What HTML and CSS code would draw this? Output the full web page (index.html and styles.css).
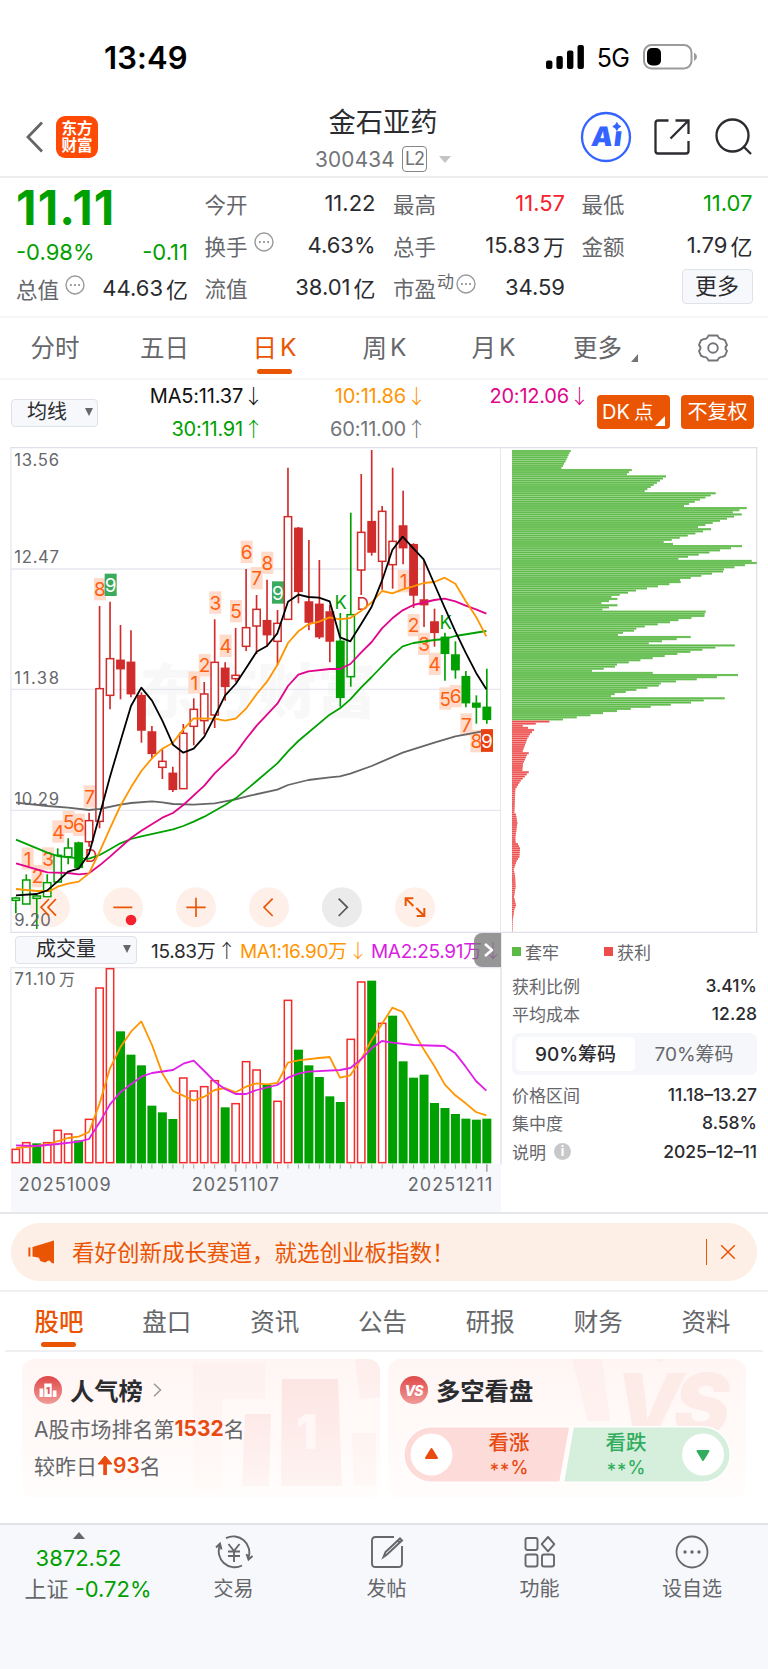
FILE: index.html
```html
<!DOCTYPE html>
<html lang="zh-CN">
<head>
<meta charset="utf-8">
<title>金石亚药 300434</title>
<link rel="stylesheet" href="styles.css">
</head>
<body>
<div class="status">
  <span class="clock">13:49</span>
  <span class="status-right">
    <svg width="38" height="24" viewBox="0 0 38 24"><rect x="0" y="15.5" width="6.4" height="8.5" rx="2"/><rect x="10.4" y="11" width="6.4" height="13" rx="2"/><rect x="21" y="5.500" width="6.4" height="18.500" rx="2"/><rect x="31.500" y="0" width="6.4" height="24" rx="2"/></svg>
    <span class="net">5G</span>
    <svg class="battery" width="54" height="26" viewBox="0 0 54 26"><rect x="1" y="1" width="47.500" height="23.500" rx="7.500" fill="none" stroke="#9b9b9b" stroke-width="2"/><rect x="4" y="4" width="14" height="17.500" rx="5" fill="#000"/><path d="M51 8.500q3 1.500 3 4.300t-3 4.300z" fill="#9b9b9b"/></svg>
  </span>
</div>

<header class="header">
  <div class="header-left">
    <svg width="19" height="32" viewBox="0 0 19 32"><path d="M17 1.500 3 16l14 14.500" fill="none" stroke="#666" stroke-width="2.800"/></svg>
    <div class="logo"><span>东方</span><span>财富</span></div>
  </div>
  <div class="header-mid">
    <h1>金石亚药</h1>
    <div class="code"><span>300434</span><span class="l2">L2</span><i></i></div>
  </div>
  <div class="header-right">
    <svg width="52" height="52" viewBox="0 0 52 52"><circle cx="26" cy="26" r="24" fill="none" stroke="#3563ff" stroke-width="2.300"/><text class="ai" transform="translate(10.500 35) skewX(-7)">Aı</text><path d="M36.800 11.500q.8 3.200 4 4-3.200.8-4 4-.8-3.200-4-4 3.200-.8 4-4z" fill="#3563ff" stroke="#3563ff" stroke-width="1"/></svg>
    <svg width="36" height="36" viewBox="0 0 36 36" fill="none" stroke="#2b2c30" stroke-width="2.300"><path d="M14.500 1.500H4Q1.500 1.500 1.500 4v28q0 2.500 2.500 2.500h28q2.500 0 2.500-2.500V22M21.500 1.500h13v13.500M34 2 16.500 19.500"/></svg>
    <svg width="37" height="37" viewBox="0 0 37 37" fill="none" stroke="#2b2c30" stroke-width="2.300"><circle cx="17.500" cy="17.500" r="16"/><path d="m28.500 28.500 7.500 7.500"/></svg>
  </div>
</header>

<section class="quote">
  <div class="q-price">
    <div class="price">11.11</div>
    <div class="row chg"><span>-0.98%</span><span>-0.11</span></div>
    <div class="row"><label>总值<svg class="more-dot" viewBox="0 0 20 20"><circle cx="10" cy="10" r="9"/><path d="M5 10h1.800M9.100 10h1.800M13.200 10h1.800"/></svg></label><b>44.63<em>亿</em></b></div>
  </div>
  <div class="q-col">
    <div class="row"><label>今开</label><b>11.22</b></div>
    <div class="row"><label>换手<svg class="more-dot" viewBox="0 0 20 20"><circle cx="10" cy="10" r="9"/><path d="M5 10h1.800M9.100 10h1.800M13.200 10h1.800"/></svg></label><b>4.63%</b></div>
    <div class="row"><label>流值</label><b>38.01<em>亿</em></b></div>
  </div>
  <div class="q-col">
    <div class="row"><label>最高</label><b class="up">11.57</b></div>
    <div class="row"><label>总手</label><b>15.83<em>万</em></b></div>
    <div class="row"><label>市盈<small>动</small><svg class="more-dot tight" viewBox="0 0 20 20"><circle cx="10" cy="10" r="9"/><path d="M5 10h1.800M9.100 10h1.800M13.200 10h1.800"/></svg></label><b>34.59</b></div>
  </div>
  <div class="q-col">
    <div class="row"><label>最低</label><b class="down">11.07</b></div>
    <div class="row"><label>金额</label><b>1.79<em>亿</em></b></div>
    <div class="row end"><span class="more-btn">更多</span></div>
  </div>
</section>

<nav class="periods">
  <span>分时</span><span>五日</span><span class="on">日<u>K</u></span><span>周<u>K</u></span><span>月<u>K</u></span><span class="drop">更多<i></i></span>
  <span><svg width="30" height="28" viewBox="0 0 30 28" fill="none" stroke="#737478" stroke-width="1.900" stroke-linejoin="round"><path d="M10.500 1.500h9q1.300 3.800 5 3.600l2.600 1.300 1.900 4.600q-3 3 0 6l-1.900 4.600-2.600 1.300q-3.700-.2-5 3.600h-9q-1.300-3.800-5-3.600l-2.600-1.300L1 17q3-3 0-6l1.900-4.600 2.600-1.300q3.700.2 5-3.600z"/><circle cx="15" cy="14" r="4.800"/></svg></span>
</nav>

<section class="ma-bar">
  <span class="select">均线<i></i></span>
  <div class="ma-grid">
    <span class="c-black">MA5:11.37<s>↓</s></span><span class="c-orange">10:11.86<s>↓</s></span><span class="c-pink">20:12.06<s>↓</s></span>
    <span class="c-green">30:11.91<s>↑</s></span><span class="c-gray">60:11.00<s>↑</s></span>
  </div>
  <div class="ma-btns"><span class="btn">DK<em>点</em><i></i></span><span class="btn">不复权</span></div>
</section>

<section class="charts">
  <div class="chart-left">
    <svg id="kline" width="501" height="486" viewBox="0 21 1503 1458"></svg>
    <div class="vol-bar">
      <span class="select">成交量<i></i></span>
      <span class="v1">15.83万<s>↑</s></span><span class="v2">MA1:16.90万<s>↓</s></span><span class="v3">MA2:25.91万<s>↓</s></span>
      <span class="expand"><svg width="27" height="34" viewBox="0 0 27 34"><path d="m11 11 7 6-7 6" fill="none" stroke="#fff" stroke-width="2.600" stroke-linejoin="round"/></svg></span>
    </div>
    <svg id="volume" width="501" height="245" viewBox="0 111 1503 735"></svg>
  </div>
  <div class="chart-right">
    <svg id="chips" width="267" height="486" viewBox="-21 6 801 1458"></svg>
    <div class="chip-info">
      <div class="legend"><span><i class="lg"></i>套牢</span><span><i class="lr"></i>获利</span></div>
      <dl><dt>获利比例</dt><dd>3.41%</dd><dt>平均成本</dt><dd>12.28</dd></dl>
      <div class="seg"><span class="on">90%筹码</span><span>70%筹码</span></div>
      <dl><dt>价格区间</dt><dd>11.18–13.27</dd><dt>集中度</dt><dd>8.58%</dd><dt>说明<i>i</i></dt><dd>2025–12–11</dd></dl>
    </div>
  </div>
</section>

<section class="promo-wrap">
  <div class="promo">
    <svg width="28" height="24" viewBox="0 0 28 24" fill="#ea5504"><path d="M.4 7.500h2v9h-2zM4.500 7 26 .5v23l-2.500-.8-2-2.200-2.200.6q-1.500 2-4 1l-3-1.100-1.300-3.200L4.500 16.500z"/></svg>
    <p>看好创新成长赛道，就选创业板指数！</p>
    <span class="promo-close"><svg width="16" height="16" viewBox="0 0 16 16"><path d="m1.200 1.200 13.600 13.600m0-13.600L1.200 14.800" stroke="#ea5504" stroke-width="1.500"/></svg></span>
  </div>
</section>

<nav class="tabs"><span class="on">股吧</span><span>盘口</span><span>资讯</span><span>公告</span><span>研报</span><span>财务</span><span>资料</span></nav>

<section class="cards">
  <div class="card">
    <svg class="art" width="190" height="139" viewBox="0 0 190 139"><defs><linearGradient id="a" x1="0" y1="0" x2="0" y2="1"><stop offset="0" stop-color="#fbdedb" stop-opacity=".7"/><stop offset="1" stop-color="#fbdedb" stop-opacity=".3"/></linearGradient></defs><g fill="url(#a)"><path d="M3 4h72v36H32v90H3z" opacity=".3"/><path d="M55 55h26l-2 72H52z" opacity=".8"/><path d="M92 20h56l4 107H91z"/><path d="M162 74h24v53h-22zM165 0h25v38l-20 2z" opacity=".5"/></g><text class="art-one" x="106" y="90">1</text></svg>
    <div class="card-title"><svg width="28" height="28" viewBox="0 0 28 28"><defs><linearGradient id="b" x1="0" y1="0" x2="0" y2="1"><stop offset="0" stop-color="#e04848"/><stop offset="1" stop-color="#f09c98"/></linearGradient></defs><circle cx="14" cy="14" r="14" fill="url(#b)"/><path d="M5.500 12.500h3.800V21H5.500zM10.300 7.500h7.400V21h-7.400zM18.800 14.500h3.700V21h-3.700z" fill="#fff"/><text x="14" y="17.500" text-anchor="middle" class="mini-one">1</text></svg><b>人气榜</b><svg width="9" height="14" viewBox="0 0 9 14"><path d="m1 .8 6.500 6.200L1 13.200" fill="none" stroke="#999" stroke-width="1.500"/></svg></div>
    <p>A股市场排名第<b>1532</b>名</p>
    <p>较昨日<svg width="16" height="19" viewBox="0 0 16 19"><path d="M8 0 1 8h5.800v11h2.600V8H15z" fill="#e84a10" stroke="#e84a10"/></svg><b class="mid">93</b>名</p>
  </div>
  <div class="card">
    <svg class="art" width="174" height="139" viewBox="0 0 174 139"><path d="M0 0h30l8 62H16zM82 0h12l-7 4z" fill="#fbdedb" opacity=".28"/><text class="art-vs" x="43" y="75">VS</text></svg>
    <div class="card-title"><svg width="28" height="28" viewBox="0 0 28 28"><circle cx="14" cy="14" r="14" fill="url(#b)"/><text x="13.500" y="19.500" text-anchor="middle" class="mini-vs">VS</text></svg><b>多空看盘</b></div>
    <div class="vote">
      <svg class="vote-bg" width="328" height="57" viewBox="0 0 328 57"><path d="M28.500.8H167L157 56.200H28.500a27.700 27.700 0 0 1 0-55.400z" fill="#fddbd8" stroke="#fff" stroke-width="1.500"/><path d="M170 .8h129.500a27.700 27.700 0 0 1 0 55.400H160.500z" fill="#d6efdc" stroke="#fff" stroke-width="1.500"/><circle cx="28.500" cy="28.500" r="21" fill="#fff"/><circle cx="300" cy="28.500" r="21" fill="#fff"/><path d="m28.500 23 5.500 9H23z" fill="#e84a10" stroke="#e84a10" stroke-width="2" stroke-linejoin="round"/><path d="m300 34 5.500-9h-11z" fill="#32ad5e" stroke="#32ad5e" stroke-width="2" stroke-linejoin="round"/></svg>
      <div class="v-up"><span>看涨</span><span><u>**</u>%</span></div>
      <div class="v-down"><span>看跌</span><span><u>**</u>%</span></div>
    </div>
  </div>
</section>

<footer class="bottom">
  <div class="index"><i></i><span class="idx">3872.52</span><span class="idx2">上证 <b>-0.72%</b></span></div>
  <div class="item"><svg width="40" height="34" viewBox="0 0 40 34" fill="none" stroke="#66676b" stroke-width="1.900"><path d="M12 3.200a16 16 0 0 1 22.500 19.300M28 30.500A16 16 0 0 1 6 10M2 12.500l4-4 1.500 6M38.500 21l-4 3.500-2-5.500M14.500 9l5.500 7 5.500-7M14 16.500h12M14 21h12M20 16v11"/></svg><span>交易</span></div>
  <div class="item"><svg width="34" height="34" viewBox="0 0 34 34" fill="none" stroke="#66676b" stroke-width="1.900"><path d="M24 2H5.500Q2 2 2 5.500v23Q2 32 5.500 32h23q3.500 0 3.500-3.500V11"/><path d="m13.500 22 2-5L30 3.500l2 2L17 19.500zM27 5l3.500 3" stroke-width="2"/></svg><span>发帖</span></div>
  <div class="item"><svg width="32" height="34" viewBox="0 0 32 34" fill="none" stroke="#66676b" stroke-width="1.900"><rect x="1.500" y="3" width="12" height="12" rx="2"/><rect x="1.500" y="19.500" width="12" height="12" rx="2"/><rect x="18" y="19.500" width="12" height="12" rx="2"/><path d="m24 2 6.300 7.200L24 16.400l-6.300-7.200z" stroke-linejoin="round"/></svg><span>功能</span></div>
  <div class="item"><svg width="34" height="34" viewBox="0 0 34 34" fill="none" stroke="#66676b" stroke-width="1.800"><circle cx="17" cy="17" r="15.500"/><g fill="#66676b" stroke="none"><circle cx="10" cy="17" r="1.700"/><circle cx="17" cy="17" r="1.700"/><circle cx="24" cy="17" r="1.700"/></g></svg><span>设自选</span></div>
</footer>
<script src="charts.js"></script>
</body>
</html>
```

FILE: styles.css
```css
* { box-sizing: border-box; }
body { margin: 0; width: 768px; height: 1669px; overflow: hidden; background: #fff; color: #2b2c30; font-family: Inter, "Noto Sans CJK SC", sans-serif; }
svg { display: block; flex: none; }
i, em, s, u { font-style: normal; text-decoration: none; }

.status { height: 100px; padding: 14px 71px 0 104px; display: flex; justify-content: space-between; align-items: center; }
.clock { font-size: 31px; font-weight: 600; color: #000; letter-spacing: .1px; }
.status-right { display: flex; align-items: center; }
.net { font-size: 25px; color: #000; margin: 2px 14px 0 13px; letter-spacing: -.8px; }

.header { height: 78px; border-bottom: 2px solid #ededef; display: grid; grid-template-columns: 270px 1fr 270px; }
.header-left { display: flex; align-items: center; padding: 0 0 4px 25px; gap: 12px; }
.logo { width: 42px; height: 42px; border-radius: 9px; background: #ff4a05; color: #fff; font-size: 15.500px; font-weight: 700; line-height: 17px; display: flex; flex-direction: column; align-items: center; justify-content: center; }
.header-mid { display: flex; flex-direction: column; align-items: center; }
h1 { margin: 5px 0 0 -2px; font-size: 27.200px; line-height: 36px; font-weight: 400; }
.code { display: flex; align-items: center; height: 36px; font-size: 20.800px; color: #737478; letter-spacing: .2px; margin-right: 2px; }
.l2 { border: 1.500px solid #85868a; border-radius: 4px; font-size: 18px; line-height: 23px; height: 26px; width: 25px; text-align: center; margin: 0 12px 0 7px; letter-spacing: -1px; }
.code i { border: 6px solid transparent; border-top: 7px solid #c4c4c6; border-bottom: 0; }
.header-right { display: flex; align-items: center; justify-content: flex-end; padding: 0 16px 4px 0; gap: 22.500px; }
.header-right svg:last-child { margin-left: 2.500px; }
.ai { font: 900 27px Inter, sans-serif; fill: #3563ff; letter-spacing: 1px; }

.quote { height: 140px; padding: 4px 15px 0 16px; border-bottom: 2px solid #f6f6f8; display: grid; grid-template-columns: 172px 171px 172px 172px; column-gap: 16.500px; }
.q-col:nth-child(n+3) { margin-left: 1px; margin-right: -1px; }
.q-col:nth-child(4) { margin-right: 0; }
.row { height: 42px; display: flex; justify-content: space-between; align-items: center; font-size: 22px; }
.row label { color: #66676b; display: flex; align-items: center; font-size: 21.500px; }
.row b { font-weight: 400; font-size: 22px; display: flex; align-items: center; }
.row b em { margin-left: 3px; }
.price { height: 55px; font-size: 47.500px; line-height: 52px; font-weight: 700; color: #00a000; letter-spacing: 1.200px; }
.chg { height: 30px; color: #00a000; font-size: 22px; }
.more-dot { width: 20px; height: 20px; margin: -7px 0 0 6px; fill: none; stroke: #999a9e; stroke-width: 1.400; }
.more-dot path { stroke-width: 1.800; }
.more-dot.tight { margin-left: 2px; }
.row small { font-size: 17px; margin: -14px 0 0 1px; }
.row .up { color: #f5222d; }
.row .down { color: #00a000; }
.row.end { justify-content: flex-end; }
.more-btn { width: 71px; height: 35px; border: 1.500px solid #e0e2ea; border-radius: 4px; background: #f7f8fb; line-height: 32px; text-align: center; margin-top: -1px; }

.periods { height: 62px; border-bottom: 2px solid #f6f6f8; display: grid; grid-template-columns: 110px 109px 111px 109px 109px 110px 110px; font-size: 24.500px; color: #66676b; }
.periods span { position: relative; display: flex; align-items: center; justify-content: center; padding-bottom: 3px; }
.periods span:last-child { padding-bottom: 1px; }
.periods u { margin-left: 3px; }
.periods .on { color: #ea5504; }
.periods .on::after, .tabs .on::after { content: ""; position: absolute; left: 50%; bottom: 4px; width: 35px; height: 5px; margin-left: -17.500px; border-radius: 2.500px; background: #ea5504; }
.periods .drop { padding-left: 5px; }
.periods .drop i { border-left: 7px solid transparent; border-bottom: 8px solid #737478; margin: 22px 0 0 9px; }

.ma-bar { height: 67px; display: grid; grid-template-columns: 98px 488px 1fr; padding-left: 11px; }
.select { display: flex; align-items: center; justify-content: space-between; border: 1.500px solid #e0e2ea; border-radius: 4px; background: #f7f8fb; color: #2b2c30; line-height: 24px; padding-bottom: 2px !important; }
.select i { border: 4.500px solid transparent; border-top: 8px solid #66676b; border-bottom: 0; }
.ma-bar .select { width: 87px; height: 28px; margin-top: 19px; padding: 0 4px 0 15px; font-size: 20px; }
.ma-grid { display: grid; grid-template-columns: 150px 163px 163px; grid-template-rows: 33px 33px; font-size: 20px; margin-top: -1px; }
.ma-grid span { display: flex; justify-content: flex-end; align-items: center; letter-spacing: -.2px; }
s { width: 11px; margin-left: 5px; display: inline-flex; justify-content: center; font-family: "Noto Sans CJK SC", sans-serif; font-weight: 300; }
.c-black { color: #111; } .c-orange { color: #ff9500; } .c-pink { color: #e0058c; } .c-green { color: #00a000; } .c-gray { color: #737478; }
.ma-btns { display: flex; gap: 11px; padding-top: 15px; }
.btn { position: relative; width: 73px; height: 34px; border-radius: 4px; background: #ea5504; color: #fff; font-size: 20px; line-height: 35px; text-align: center; white-space: nowrap; }
.btn:first-child { text-align: left; padding-left: 5px; }
.btn em { margin-left: 4px; font-size: 19.500px; }
.btn i { position: absolute; right: 5px; bottom: 3px; border-left: 10px solid transparent; border-bottom: 10px solid #fff; }

.charts { height: 767px; display: grid; grid-template-columns: 501px 267px; border-bottom: 2px solid #e6e7eb; }
svg text { font-family: Inter, "Noto Sans CJK SC", sans-serif; }
.vol-bar { position: relative; height: 34px; display: flex; align-items: center; padding-left: 15px; font-size: 19px; }
.vol-bar .select { width: 122px; height: 28px; padding: 0 5px 0 20px; font-size: 20px; margin-right: 14px; }
.vol-bar > span { white-space: nowrap; }
.vol-bar .v1, .vol-bar .v2, .vol-bar .v3 { width: 89px; letter-spacing: -.3px; margin-top: -2px; }
.vol-bar .v2 { width: 131px; color: #ff9500; }
.vol-bar .v3 { color: #d81ee0; }
.vol-bar s { width: 12px; margin-left: 5px; }
.expand { position: absolute; right: 0; top: 0; width: 27px; height: 34px; border-radius: 8px 0 0 8px; background: rgba(120, 120, 120, .78); }

.chip-info { border-left: 1px solid #ececf0; height: 232px; padding: 3px 11px 0 10px; color: #66676b; font-size: 17px; }
.legend { display: flex; height: 30px; align-items: center; }
.legend span { width: 92px; display: flex; align-items: center; gap: 4px; }
.legend i { width: 9px; height: 9px; }
.lg { background: #5cb946; } .lr { background: #ee4b4b; }
.chip-info dl { margin: 5px 0 0; display: grid; grid-template-columns: auto 1fr; grid-auto-rows: 28.500px; align-items: center; }
.chip-info dt { display: flex; align-items: center; }
.chip-info dt i { width: 17px; height: 17px; border-radius: 50%; background: #c8c8ca; color: #fff; font-size: 13px; font-weight: 700; line-height: 17px; text-align: center; margin-left: 8px; }
.chip-info dd { margin: 0; text-align: right; color: #2b2c30; font-weight: 500; font-size: 17.500px; }
.seg { margin-top: 5px; height: 42px; border-radius: 7px; background: #f6f7fb; padding: 4px; display: grid; grid-template-columns: 119px 1fr; font-size: 19px; line-height: 36px; text-align: center; }
.seg .on { background: #fff; border-radius: 5px; color: #2b2c30; font-weight: 500; height: 34px; }

.promo-wrap { height: 78px; padding: 9px 11px 0; border-bottom: 2px solid #f0f0f2; }
.promo { height: 58px; border-radius: 29px; background: #fdeee6; display: flex; align-items: center; padding: 0 21px 0 17px; color: #ea5504; }
.promo p { flex: 1; margin: -3px 0 0 16px; font-size: 22.500px; }
.promo-close { height: 26px; border-left: 1.500px solid #ea5504; padding: 5px 0 0 13px; }

.tabs { height: 60px; margin: 0 5px; border-bottom: 2px solid #f0f0f2; display: flex; padding-right: 3px; font-size: 24.500px; color: #66676b; }
.tabs span { position: relative; width: 108.200px; display: flex; align-items: center; justify-content: center; padding-bottom: 1px; }
.tabs .on { color: #ea5504; font-weight: 500; }
.tabs .on::after { bottom: 3px; }

.cards { height: 171px; padding: 7px 22px 0; display: grid; grid-template-columns: 358px 358px; gap: 8px; }
.card { position: relative; height: 139px; border-radius: 12px; background: linear-gradient(#fff6f4, #fffdfc); overflow: hidden; padding: 15px 12px; }
.art { position: absolute; right: 0; top: 0; }
.art-one { font: 900 48px Inter, sans-serif; fill: #fff7f5; }
.art-vs { font: italic 900 84px Inter, sans-serif; fill: #fdebe8; letter-spacing: -8px; }
.mini-one { font: 900 9px Inter, sans-serif; fill: #e25a58; }
.mini-vs { font: italic 800 14px Inter, sans-serif; fill: #fff; letter-spacing: -1px; }
.card-title { position: relative; display: flex; align-items: center; height: 31px; font-size: 24.300px; }
.card-title svg { margin-top: 1px; }
.card-title b { font-weight: 600; margin: 0 10px 0 8px; }
.card p { position: relative; margin: 5px 0 0; height: 36px; display: flex; align-items: center; font-size: 21px; color: #66676b; }
.card p + p { margin-top: 1px; }
.card p b { color: #e84a10; font-weight: 700; }
.card p b.mid { font-weight: 600; }
.vote { position: relative; width: 328px; height: 57px; margin: 21px 0 0 3px; }
.vote-bg { position: absolute; left: 0; top: 0; }
.vote div { position: absolute; top: 4px; width: 70px; text-align: center; font-size: 20.500px; line-height: 26px; font-weight: 500; display: flex; flex-direction: column; }
.vote div span:last-child { font-size: 18px; line-height: 24px; }
.vote u { position: relative; top: 3px; letter-spacing: 1px; }
.v-up { left: 71px; color: #e84a10; }
.v-down { left: 188px; color: #32ad5e; }

.bottom { height: 147px; background: #f7f8fb; border-top: 2px solid #e2e3e8; display: grid; grid-template-columns: 157px 153px 153px 153px 152px; color: #66676b; font-size: 20px; }
.item { display: flex; flex-direction: column; align-items: center; padding-top: 10px; }
.item span { margin-top: 4px; line-height: 32px; }
.index { display: flex; flex-direction: column; align-items: center; padding: 7px 0 0 0; }
.index i { border: 6px solid transparent; border-bottom: 7px solid #66676b; border-top: 0; }
.idx { color: #00a000; font-size: 22px; line-height: 32px; margin-top: 3px; }
.idx2 { font-size: 22px; line-height: 30px; padding-left: 19px; white-space: nowrap; }
.idx2 b { color: #00a000; font-weight: 400; }
```

FILE: charts.js
```js
const RED = '#d12c2c', GREEN = '#00a000';
const X0 = 47.5, STEP = 31.4;

const line = (x1, y1, x2, y2, c, w) => `<path d="M${x1} ${y1}L${x2} ${y2}" stroke="${c}" stroke-width="${w}"/>`;
const curve = (pts, c) => `<polyline points="${pts}" fill="none" stroke="${c}" stroke-width="5.4" stroke-linejoin="round"/>`;
const text = (x, y, s, size, c, extra = '') => `<text x="${x}" y="${y}" font-size="${size}" fill="${c}" ${extra}>${s}</text>`;

// Candles: [style, high, body top, body bottom, low]; r/g hollow, R/G filled
const candles = [
  ['g',1370,1374,1381,1420],['g',1303,1320,1392,1392],['g',1360,1368,1375,1467],['g',1303,1328,1370,1370],
  ['g',1225,1246,1326,1326],['g',1195,1224,1250,1273],['G',1205,1209,1282,1282],['r',1118,1142,1205,1220],
  ['r',498,746,1144,1165],['r',485,656,766,808],['R',555,661,686,778],['R',571,667,761,772],
  ['R',757,767,870,908],['R',858,876,940,957],['r',928,964,982,1017],['R',980,1000,1048,1056],
  ['r',852,880,1046,1046],['r',775,808,859,916],['r',726,762,842,883],['r',538,667,825,864],
  ['R',667,685,739,782],['r',564,706,716,725],['r',387,563,619,633],['r',465,508,558,642],
  ['R',419,542,584,620],['r',510,550,604,675],['r',83,230,538,538],['R',261,265,454,490],
  ['R',300,486,546,571],['R',360,493,590,597],['R',495,516,603,667],['G',519,604,772,800],
  ['g',218,524,710,740],['r',102,277,390,465],['R',30,245,336,347],['r',198,214,364,449],
  ['r',83,304,374,446],['R',152,258,323,373],['R',310,314,465,504],['R',360,480,494,561],
  ['R',506,546,577,620],['G',578,592,640,722],['G',604,645,689,716],['G',693,710,788,802],
  ['G',766,790,801,851],['G',686,802,838,851]
];

// Sequence markers: [x, y, label, kind]
const marks = [
  [83,1256,1],[113,1309,2],[144,1256,3],[175,1175,4],[206,1146,5],[237,1155,6],[269,1070,7],[300,448,8],
  [332,435,9,'g'],[583,728,1],[614,676,2],[646,488,3],[677,618,4],[708,514,5],[740,336,6],[770,415,7],
  [802,369,8],[834,458,9,'g'],[1211,424,1],[1241,556,2],[1272,612,3],[1304,672,4],[1336,776,5],
  [1367,769,6],[1399,854,7],[1429,904,8],[1461,902,9,'r']
];

const maLines = [
  ['#666', '48,1088 142,1098 204,1103 267,1110 299,1107 361,1094 393,1089 456,1084 487,1087 519,1092 581,1094 644,1090 707,1078 750,1067 832,1049 864,1035 925,1020 989,1012 1020,1009 1051,1001 1115,978 1208,938 1303,908 1366,889 1459,872'],
  [GREEN, '48,1199 142,1238 173,1248 236,1255 267,1256 299,1245 330,1228 361,1210 393,1197 424,1189 519,1168 550,1158 581,1145 613,1130 675,1095 707,1075 750,1040 832,970 864,934 895,903 989,824 1020,805 1051,778 1083,743 1115,711 1177,646 1208,619 1240,609 1303,600 1334,597 1366,588 1459,573'],
  ['#e0058c', '48,1270 142,1297 204,1299 236,1303 267,1300 299,1276 330,1250 393,1194 424,1172 487,1133 519,1119 550,1095 613,1037 644,1000 707,940 738,897 770,857 832,791 864,738 895,704 925,694 989,687 1020,687 1051,672 1083,638 1115,606 1146,565 1177,535 1208,511 1240,495 1303,480 1334,476 1366,484 1397,497 1428,508 1459,521'],
  ['#ff9500', '48,1347 110,1353 150,1353 173,1340 204,1331 236,1325 267,1300 299,1235 330,1165 361,1098 393,1042 424,993 456,955 487,926 519,908 550,868 581,835 644,836 675,842 707,836 738,806 770,762 801,725 832,675 864,609 895,574 925,553 957,545 989,532 1020,538 1051,534 1083,513 1115,487 1146,453 1177,460 1208,448 1240,439 1271,429 1303,426 1334,413 1366,431 1397,483 1428,530 1459,589'],
  ['#000', '48,1366 110,1362 142,1351 173,1324 204,1295 236,1286 267,1241 299,1125 330,1010 361,905 393,798 424,743 456,782 487,842 519,914 550,938 581,926 613,890 644,830 675,767 707,732 738,685 770,635 801,618 832,580 864,485 895,464 925,471 957,473 989,484 1020,592 1051,604 1083,553 1115,500 1146,422 1177,330 1208,290 1240,325 1271,358 1303,432 1334,503 1366,574 1397,638 1428,698 1459,748']
];

function drawKline() {
  let s = '';
  s += text(418, 820, '东方财富', 178, '#f8f8f8', 'font-weight="900" textLength="710"');
  for (const y of [387, 748, 1111]) s += line(33, y, 1503, y, '#e6e7ef', 4);
  s += line(33, 21, 33, 1479, '#e6e7ef', 4) + line(1502, 21, 1502, 1479, '#e6e7ef', 4);
  s += line(31, 22, 1503, 22, '#dfe0ea', 6) + line(31, 1477, 1503, 1477, '#dfe0ea', 4);
  for (const cx of [150, 369, 588, 807, 1026, 1245]) s += `<circle cx="${cx}" cy="1402" r="60" fill="${cx === 1026 ? '#ebebeb' : '#fef0e9'}"/>`;
  for (const [x, y, n, k] of marks) {
    s += `<rect x="${x - 18}" y="${y - 34}" width="36" height="67" fill="${k === 'g' ? '#3aaa5c' : k === 'r' ? '#e8400f' : '#fedbcb'}"/>`;
    s += text(x, y + 21, n, 57, k ? '#fff' : '#ff6010', 'text-anchor="middle"');
  }
  candles.forEach(([k, h, t, b, l], i) => {
    const x = X0 + i * STEP, c = k.toLowerCase() === 'r' ? RED : GREEN;
    s += line(x, h, x, t, c, 5) + line(x, b, x, l, c, 5);
    s += `<rect x="${x - 11}" y="${t}" width="22" height="${b - t}" fill="${k === 'R' || k === 'G' ? c : '#fff'}" stroke="${c}" stroke-width="4.5"/>`;
  });
  s += text(273, 1267, 'D', 52, RED, 'text-anchor="middle"') + text(1088, 509, 'D', 52, RED, 'text-anchor="middle"');
  s += text(1022, 507, 'K', 55, GREEN, 'text-anchor="middle"') + text(1337, 567, 'K', 55, GREEN, 'text-anchor="middle"');
  for (const [c, p] of maLines) s += curve(p, c);
  s += `<rect x="1443" y="868" width="36" height="67" fill="#e8400f"/>` + text(1461, 923, '9', 57, '#fff', 'text-anchor="middle"');
  [[78, '13.56'], [369, '12.47'], [732, '11.38'], [1096, '10.29'], [1459, '9.20']].forEach(([y, t]) => {
    s += text(43, y, t, 50, '#66676b', `textLength="${t.length > 4 ? 134 : 109}"`);
  });
  s += `<g fill="none" stroke="#ea5504" stroke-width="5"><path d="M147 1377l-24 25 24 25M168 1377l-24 25 24 25M340 1402h57M559 1402h58M588 1373v58M818 1376l-26 26 26 26"/><path d="M1217 1398v-23h23M1218 1376l22 22M1250 1428h23v-24M1249 1404l24 24" stroke-width="6"/></g>`;
  s += `<path d="M1016 1376l26 26-26 26" fill="none" stroke="#555" stroke-width="5"/><circle cx="393" cy="1440" r="16" fill="#f5222d"/>`;
  document.getElementById('kline').innerHTML = s;
}

const volumes = 'r657 r637 g640 r637 r600 r611 g631 r567 r173 r115 g304 g374 g406 g527 g547 g567 r443 r482 r469 r451 g532 r520 r394 r419 g465 r513 r210 g359 g406 g441 g499 g516 r327 r155 g152 r279 g257 g394 g443 g434 g519 g534 g552 g566 g569 g566'.split(' ');

function drawVolume() {
  let s = '<rect x="33" y="701" width="1470" height="145" fill="#f7f8fb"/>';
  s += line(33, 113, 1503, 113, '#e6e7ef', 4) + line(33, 111, 33, 701, '#e6e7ef', 4) + line(1502, 111, 1502, 701, '#e6e7ef', 4);
  s += text(43, 164, '71.10', 51, '#66676b', 'textLength="124"') + text(177, 164, '万', 48, '#66676b');
  volumes.forEach((v, i) => {
    const x = X0 + i * STEP, y = +v.slice(1);
    s += v[0] === 'r'
      ? `<rect x="${x - 11}" y="${y + 1}" width="22" height="${697 - y}" fill="#fff" stroke="#f52a2a" stroke-width="4.5"/>`
      : `<rect x="${x - 13.5}" y="${y}" width="27" height="${700 - y}" fill="${GREEN}"/>`;
    if (i > 10) s += line(x, 703, x, i === 21 || i === 45 ? 725 : 716, '#aaa', i === 21 || i === 45 ? 5 : 3);
  });
  s += curve('48,654 110,648 150,641 204,624 236,620 267,606 299,520 330,415 361,352 393,305 424,274 456,345 487,430 519,483 550,497 581,512 613,500 644,480 675,474 707,487 738,470 770,460 801,463 832,459 864,398 895,391 957,384 989,381 1020,443 1051,436 1083,388 1115,330 1177,233 1208,246 1271,358 1303,408 1334,463 1366,496 1397,520 1428,546 1459,556', '#ff9500');
  s += curve('48,646 110,648 173,642 236,635 267,627 299,577 330,523 361,487 393,463 424,440 456,429 519,420 550,401 581,392 613,423 644,455 675,477 707,492 738,492 770,480 832,465 864,443 895,431 925,425 1020,420 1051,414 1083,388 1115,355 1146,333 1177,338 1240,345 1334,348 1366,370 1397,410 1428,453 1459,482', '#e01ee8');
  s += text(56, 782, '20251009', 54, '#66676b', 'textLength="276"') + text(575, 782, '20251107', 54, '#66676b', 'textLength="262"') + text(1223, 782, '20251211', 54, '#66676b', 'textLength="254"');
  document.getElementById('volume').innerHTML = s;
}

const trapped = [188,184,181,178,175,172,168,165,160,371,363,357,474,465,456,447,437,428,418,410,623,608,592,576,560,543,528,716,694,674,701,678,657,636,614,592,570,609,585,562,539,515,491,467,495,702,669,636,604,572,540,511,731,746,711,679,648,645,612,580,548,516,518,484,450,417,384,360,335,310,328,303,280,328,303,283,593,590,589,550,511,486,449,410,385,378,345,330,548,506,462,422,680,622,583,547,508,470,434,397,362,327,321,287,252,434,690,627,566,504,458,452,418,385,353,320,309,650,587,549,488,428,368,327,285,247,206,165];
// Profit side as [index, width] key points, interpolated between them
const profit = [[128,112],[129,71],[130,32],[131,48],[132,66],[133,60],[134,54],[136,46],[142,32],[143,50],[144,44],[148,33],[151,31],[152,50],[153,44],[156,26],[160,10],[171,7],[172,12],[176,16],[183,10],[185,11],[186,18],[188,24],[192,22],[194,14],[198,5],[201,9],[206,11],[211,6],[215,12],[217,7],[222,2],[228,1]];

function drawChips() {
  const pitch = 6.34;
  let s = line(-21, 7, 748, 7, '#dfe0ea', 6) + line(746, 6, 746, 1464, '#dfe0ea', 4) + line(-21, 1462, 748, 1462, '#dfe0ea', 4);
  const bar = (k, w, light, dark) => {
    const y = 18 + k * pitch;
    s += `<rect x="12" y="${(y - 3.2).toFixed(2)}" width="${w}" height="6.6" fill="${light}"/><rect x="12" y="${(y - 1.5).toFixed(2)}" width="${w}" height="3" fill="${dark}"/>`;
  };
  trapped.forEach((x, k) => bar(k, x - 12, '#7cca69', '#5fb84c'));
  for (let j = 0; j < profit.length - 1; j++) {
    const [a, wa] = profit[j], [b, wb] = profit[j + 1];
    for (let k = a; k < b; k++) bar(k, wa + (wb - wa) * (k - a) / (b - a), '#f57d7d', '#e94f4f');
  }
  document.getElementById('chips').innerHTML = s;
}

drawKline();
drawVolume();
drawChips();
```
